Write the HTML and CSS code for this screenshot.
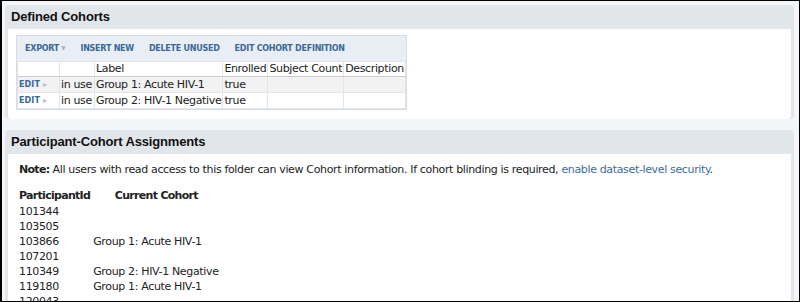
FILE: index.html
```html
<!DOCTYPE html>
<html lang="en">
<head>
<meta charset="UTF-8" />
<title>Cohorts</title>
<link rel="stylesheet" href="styles.css">
</head>
<body>
<div class="frame">

  <div class="panel">
    <div class="panel-title">Defined Cohorts</div>
    <div class="panel-body">
      <div class="grid">
        <div class="toolbar">
          <a class="tb-btn">Export<span class="caret">&#9660;</span></a>
          <a class="tb-btn">Insert New</a>
          <a class="tb-btn">Delete Unused</a>
          <a class="tb-btn">Edit Cohort Definition</a>
        </div>
        <table class="data">
          <tr class="head">
            <td class="c-edit"></td>
            <td class="c-use"></td>
            <td class="c-label">Label</td>
            <td class="c-enr">Enrolled</td>
            <td class="c-count">Subject Count</td>
            <td class="c-desc">Description</td>
          </tr>
          <tr class="odd">
            <td><a class="edit">Edit<span class="arrow">&#9656;</span></a></td>
            <td>in use</td>
            <td>Group 1: Acute HIV-1</td>
            <td>true</td>
            <td></td>
            <td></td>
          </tr>
          <tr>
            <td><a class="edit">Edit<span class="arrow">&#9656;</span></a></td>
            <td>in use</td>
            <td>Group 2: HIV-1 Negative</td>
            <td>true</td>
            <td></td>
            <td></td>
          </tr>
        </table>
      </div>
    </div>
  </div>

  <div class="panel">
    <div class="panel-title">Participant-Cohort Assignments</div>
    <div class="panel-body">
      <p class="note"><b>Note:</b> All users with read access to this folder can view Cohort information. If cohort blinding is required, <a class="link">enable dataset-level security</a>.</p>
      <table class="assign">
        <tr><th>ParticipantId</th><th>Current Cohort</th></tr>
        <tr><td>101344</td><td></td></tr>
        <tr><td>103505</td><td></td></tr>
        <tr><td>103866</td><td>Group 1: Acute HIV-1</td></tr>
        <tr><td>107201</td><td></td></tr>
        <tr><td>110349</td><td>Group 2: HIV-1 Negative</td></tr>
        <tr><td>119180</td><td>Group 1: Acute HIV-1</td></tr>
        <tr><td>120043</td><td></td></tr>
      </table>
    </div>
  </div>

</div>
</body>
</html>
```

FILE: styles.css
```css
html, body {
  margin: 0;
  padding: 0;
}

body {
  font-family: "DejaVu Sans", Verdana, sans-serif;
  font-size: 11px;
  letter-spacing: -0.35px;
  color: #222;
}

b, th {
  letter-spacing: -0.7px;
}

.frame {
  box-sizing: border-box;
  height: 302px;
  overflow: hidden;
  border: 1px solid #000;
  border-left-width: 2px;
  background: #f4f5f6;
  padding: 4px 5px 0 3px;
}

.panel {
  background: #e1e6ea;
  border-radius: 4px;
  margin-bottom: 11px;
}

.panel-title {
  font-family: "Liberation Sans", Arial, sans-serif;
  font-weight: bold;
  font-size: 13px;
  letter-spacing: -0.15px;
  color: #111;
  height: 24px;
  line-height: 24px;
  padding-left: 6px;
}

.panel-body {
  background: #fff;
  margin: 0 3px;
  padding: 6px 8px 9px 8px;
  border-radius: 0 0 3px 3px;
}

.panel:first-child .panel-body {
  margin-bottom: 3px;
}

.grid {
  display: inline-block;
  border: 1px solid #d6dde4;
}

.toolbar {
  background: #e8eef4;
  height: 25px;
  display: flex;
  align-items: center;
  padding-left: 8px;
  gap: 15px;
}

.tb-btn {
  font-size: 8px;
  font-weight: bold;
  letter-spacing: -0.25px;
  text-transform: uppercase;
  color: #3a6898;
}

.caret {
  font-size: 6px;
  color: #aab4bf;
  margin-left: 2px;
  vertical-align: 1px;
}

.data {
  border-collapse: collapse;
  background: #fff;
}

.data td {
  border: 1px solid #e1e4e8;
  padding: 0 1px;
  height: 14px;
  line-height: 14px;
  white-space: nowrap;
}

.data tr.head td {
  border-bottom-color: #c9ced4;
}

.data tr.odd td {
  background: #f2f2f2;
}

.c-edit { width: 39px; }
.c-use { width: 32px; }

.edit {
  font-size: 8px;
  font-weight: bold;
  letter-spacing: 0.1px;
  text-transform: uppercase;
  color: #3a6898;
}

.arrow {
  color: #b8bec5;
  font-size: 8px;
  margin-left: 3px;
}

.note {
  margin: 3px 0 12px 3px;
}

.link {
  color: #3c6b9c;
}

.assign {
  border-collapse: collapse;
  margin-left: 1px;
}

.assign th {
  font-weight: bold;
  padding: 0 1px 1px 2px;
  height: 15px;
}

.assign td {
  padding: 0 2px;
  height: 15px;
}
```
